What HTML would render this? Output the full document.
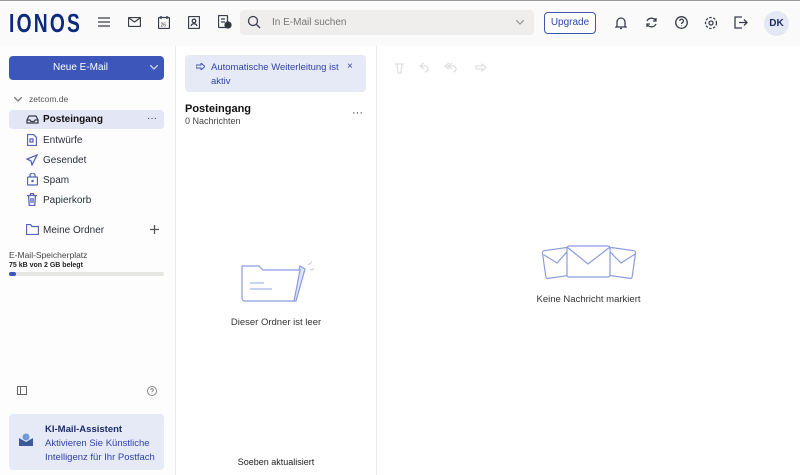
<!DOCTYPE html>
<html><head><meta charset="utf-8"><style>
*{box-sizing:border-box;margin:0;padding:0}
body{width:800px;height:475px;overflow:hidden;background:#fafafa;font-family:"Liberation Sans",sans-serif;color:#1f2430;position:relative}
.abs{position:absolute}
svg{position:absolute;fill:none;stroke:#3a3f4a;stroke-width:1.3}
.nav svg{stroke:#5a63b8}
.t{font-size:10px;color:#2a2f3a}
</style></head><body>
<div class="abs" style="left:0;top:0;width:800px;height:1px;background:#999"></div>
<div class="abs" style="left:9px;top:8px;font-size:26px;font-weight:bold;color:#0b2a80;letter-spacing:3px;transform:scaleX(.74);transform-origin:left;font-family:'Liberation Sans Narrow','Liberation Sans',sans-serif">IONOS</div>
<svg style="left:98px;top:17px" width="12" height="10"><path d="M0 1H12M0 5H12M0 9H12"/></svg>
<svg style="left:128px;top:17px" width="13" height="10"><rect x=".5" y=".5" width="12" height="9" rx="1"/><path d="M1 1l5.5 4 5.5-4"/></svg>
<svg style="left:158px;top:16px" width="12" height="13"><rect x=".5" y="1.5" width="11" height="11" rx="1"/><path d="M3 0v3M9 0v3"/><text x="2.5" y="10.5" font-size="5" stroke="none" fill="#333">26</text></svg>
<svg style="left:188px;top:16px" width="12" height="13"><rect x=".5" y=".5" width="11" height="12" rx="1"/><circle cx="6" cy="5" r="1.8"/><path d="M3 10c1-3 5-3 6 0"/></svg>
<svg style="left:218px;top:15px" width="14" height="14"><rect x=".5" y=".5" width="9" height="12" rx="1"/><path d="M3 4h4M3 7h4"/><circle cx="10" cy="10" r="3" fill="#333"/></svg>
<div class="abs" style="left:240px;top:10px;width:294px;height:25px;background:#efeeec;border-radius:4px"></div>
<svg style="left:247px;top:15px" width="14" height="14"><circle cx="6" cy="6" r="4.5"/><path d="M9.5 9.5l3.5 3.5"/></svg>
<div class="abs" style="left:272px;top:17px;font-size:10px;color:#777">In E-Mail suchen</div>
<svg style="left:516px;top:20px;stroke:#999" width="8" height="5"><path d="M0 0l4 4 4-4"/></svg>
<div class="abs" style="left:544px;top:12px;width:52px;height:22px;border:1px solid #3f55b0;border-radius:4px;font-size:10px;color:#2e44a8;text-align:center;line-height:20px;background:#fff">Upgrade</div>
<svg style="left:615px;top:16px" width="12" height="14"><path d="M2 10V6a4 4 0 018 0v4l1 1H1zM5 12.5h2"/></svg>
<svg style="left:645px;top:16px" width="13" height="13"><path d="M2 5a5 5 0 019 0M11 8a5 5 0 01-9 0"/><path d="M11 2v3H8M2 11V8h3"/></svg>
<svg style="left:675px;top:16px" width="13" height="13"><circle cx="6.5" cy="6.5" r="5.8"/><path d="M4.8 5a1.8 1.8 0 113 1.3c-.8.5-1.3.8-1.3 1.7M6.5 9.5v.6"/></svg>
<svg style="left:704px;top:16px" width="14" height="14"><circle cx="7" cy="7" r="2"/><circle cx="7" cy="7" r="5.5" stroke-dasharray="2.5 1.5"/></svg>
<svg style="left:734px;top:16px" width="14" height="13"><path d="M8 1H1v11h7M5 6.5h8M10 3.5l3 3-3 3"/></svg>
<div class="abs" style="left:764px;top:11px;width:25px;height:25px;border-radius:50%;background:#e4e8f4;font-size:10px;font-weight:bold;color:#1c2c6a;text-align:center;line-height:25px">DK</div>
<div class="abs" style="left:0;top:46px;width:175px;height:429px;background:#fdfdfd"></div>
<div class="abs" style="left:175px;top:46px;width:1px;height:429px;background:#ececec"></div>
<div class="abs" style="left:176px;top:46px;width:200px;height:429px;background:#fff"></div>
<div class="abs" style="left:376px;top:46px;width:1px;height:429px;background:#ececec"></div>
<div class="abs" style="left:377px;top:46px;width:423px;height:429px;background:#fff"></div>
<div class="abs" style="left:9px;top:56px;width:155px;height:24px;background:#3c56ba;border-radius:4px;color:#fff;font-size:10px;line-height:24px;padding-left:44px">Neue E-Mail</div>
<svg style="left:150px;top:65px;stroke:#cdd5f0" width="8" height="5"><path d="M0 0l4 4 4-4"/></svg>
<svg style="left:14px;top:97px;stroke:#777" width="8" height="5"><path d="M0 0l4 4 4-4"/></svg>
<div class="abs" style="left:29px;top:94px;font-size:8.5px;color:#555">zetcom.de</div>
<div class="abs" style="left:9px;top:110px;width:155px;height:19px;background:#e3e6f4;border-radius:4px"></div>
<svg style="left:26px;top:115px" width="13" height="9"><path d="M1 8h11V5L10 1H3L1 5zM1 5h3l1 1.5h3L9 5h3"/></svg>
<div class="abs t" style="left:43px;top:114px;font-weight:bold;color:#111">Posteingang</div>
<div class="abs" style="left:147px;top:113px;font-size:10px;color:#333">···</div>
<div class="nav">
<svg style="left:27px;top:134px" width="10" height="12"><path d="M.5.5h6l3 3v8H.5z"/><path d="M3 5h3v3H3z"/></svg>
<div class="abs t" style="left:43px;top:135px">Entwürfe</div>
<svg style="left:26px;top:154px" width="12" height="12"><path d="M11 1L1 5l4 2 1 4z"/></svg>
<div class="abs t" style="left:43px;top:155px">Gesendet</div>
<svg style="left:27px;top:173px" width="11" height="13"><rect x=".5" y="4" width="10" height="8" rx="1"/><path d="M3 4V2.5a2.5 2.5 0 015 0V4"/><circle cx="5.5" cy="8" r=".6"/></svg>
<div class="abs t" style="left:43px;top:175px">Spam</div>
<svg style="left:27px;top:193px" width="10" height="13"><path d="M0 2.5h10M3.5 2.5V.5h3v2M1.5 2.5l.8 10h5.4l.8-10M4 5v5M6 5v5"/></svg>
<div class="abs t" style="left:43px;top:195px">Papierkorb</div>
<svg style="left:26px;top:224px" width="13" height="11"><path d="M.5 1.5V10.5h12v-8H6L4.5.5H.5z"/></svg>
</div>
<div class="abs t" style="left:43px;top:225px">Meine Ordner</div>
<svg style="left:150px;top:225px;stroke:#555" width="9" height="9"><path d="M4.5 0v9M0 4.5h9"/></svg>
<div class="abs" style="left:9px;top:250px;font-size:8.5px;color:#444">E-Mail-Speicherplatz</div>
<div class="abs" style="left:9px;top:262px;font-size:7px;font-weight:bold;color:#222">75 kB von 2 GB belegt</div>
<div class="abs" style="left:9px;top:272px;width:155px;height:4px;background:#e6e6e2;border-radius:2px"></div>
<div class="abs" style="left:9px;top:272px;width:7px;height:4px;background:#3c56ba;border-radius:2px"></div>
<svg style="left:17px;top:386px;stroke:#666;stroke-width:1" width="10" height="9"><rect x=".5" y=".5" width="9" height="8"/><path d="M3.5 .5v8"/></svg>
<svg style="left:147px;top:386px;stroke:#888;stroke-width:1" width="10" height="10"><circle cx="5" cy="5" r="4.5"/><path d="M3.7 4a1.3 1.3 0 112 1c-.5.4-.7.6-.7 1.2M5 7.5v.3"/></svg>
<div class="abs" style="left:9px;top:414px;width:155px;height:56px;background:#e6eaf6;border-radius:4px"></div>
<svg style="left:19px;top:433px;stroke:none" width="14" height="13"><path d="M0 5l7 4 7-4v8H0z" fill="#3c5a9a"/><circle cx="7" cy="4" r="3.5" fill="#6f9ad8"/></svg>
<div class="abs" style="left:45px;top:424px;font-size:9.5px;font-weight:bold;color:#1c2c6a">KI-Mail-Assistent</div>
<div class="abs" style="left:45px;top:437px;font-size:9.5px;color:#2e44a8;line-height:13.5px">Aktivieren Sie Künstliche<br>Intelligenz für Ihr Postfach</div>
<div class="abs" style="left:185px;top:55px;width:181px;height:37px;background:#e6eaf6;border-radius:4px"></div>
<svg style="left:196px;top:63px;stroke:#3f55b0;stroke-width:1" width="9" height="7"><path d="M0 2h5V0l4 3.5L5 7V5H0z"/></svg>
<div class="abs" style="left:211px;top:61px;font-size:9.5px;color:#2e44a8;line-height:13.5px">Automatische Weiterleitung ist<br>aktiv</div>
<div class="abs" style="left:347px;top:61px;font-size:10px;color:#2e44a8">×</div>
<div class="abs" style="left:185px;top:103px;font-size:11px;font-weight:bold;color:#111">Posteingang</div>
<div class="abs" style="left:185px;top:116px;font-size:9px;color:#444">0 Nachrichten</div>
<div class="abs" style="left:352px;top:107px;font-size:11px;color:#333">···</div>
<svg style="left:238px;top:256px;stroke:#8b9be0;stroke-width:1.2" width="80" height="50"><path d="M62 10l5 3-9 32h-4z" fill="#dde3f8"/><path d="M4 10h17l4 4h37l-6 31H7a3 3 0 01-3-3z" fill="#fff"/><path d="M12 27h14M12 33h22" stroke="#c9d1f2" stroke-width="2"/><path d="M70 9l4-3M72 14l4-1" stroke="#c9d1f2"/></svg>
<div class="abs" style="left:176px;top:317px;width:200px;text-align:center;font-size:9.5px;color:#333">Dieser Ordner ist leer</div>
<div class="abs" style="left:176px;top:457px;width:200px;text-align:center;font-size:9px;color:#222">Soeben aktualisiert</div>
<svg style="left:394px;top:62px;stroke:#e0e0e0" width="100" height="12"><path d="M1 2h9M3 2l1 9h3l1-9"/><path d="M30 7l-4-3 4-3M26 4h5a3 3 0 010 6"/><path d="M55 7l-4-3 4-3M58 7l-4-3 4-3M54 4h5a3 3 0 010 6"/><path d="M82 4h6V2l4 3.5L88 9V7h-6z"/></svg>
<svg style="left:541px;top:244px;stroke:#8b9be0;stroke-width:1.2" width="96" height="36"><rect x="3" y="5" width="26" height="28" rx="2" transform="rotate(-8 16 19)" fill="#fff"/><path d="M4 9l12 10 13-11" transform="rotate(-8 16 19)"/><rect x="67" y="5" width="26" height="28" rx="2" transform="rotate(8 80 19)" fill="#fff"/><path d="M67 9l13 10 13-11" transform="rotate(8 80 19)"/><rect x="26" y="2" width="43" height="31" rx="2" fill="#fff"/><path d="M26 3l21 17 22-17"/></svg>
<div class="abs" style="left:377px;top:294px;width:423px;text-align:center;font-size:9.5px;color:#333">Keine Nachricht markiert</div>
</body></html>
